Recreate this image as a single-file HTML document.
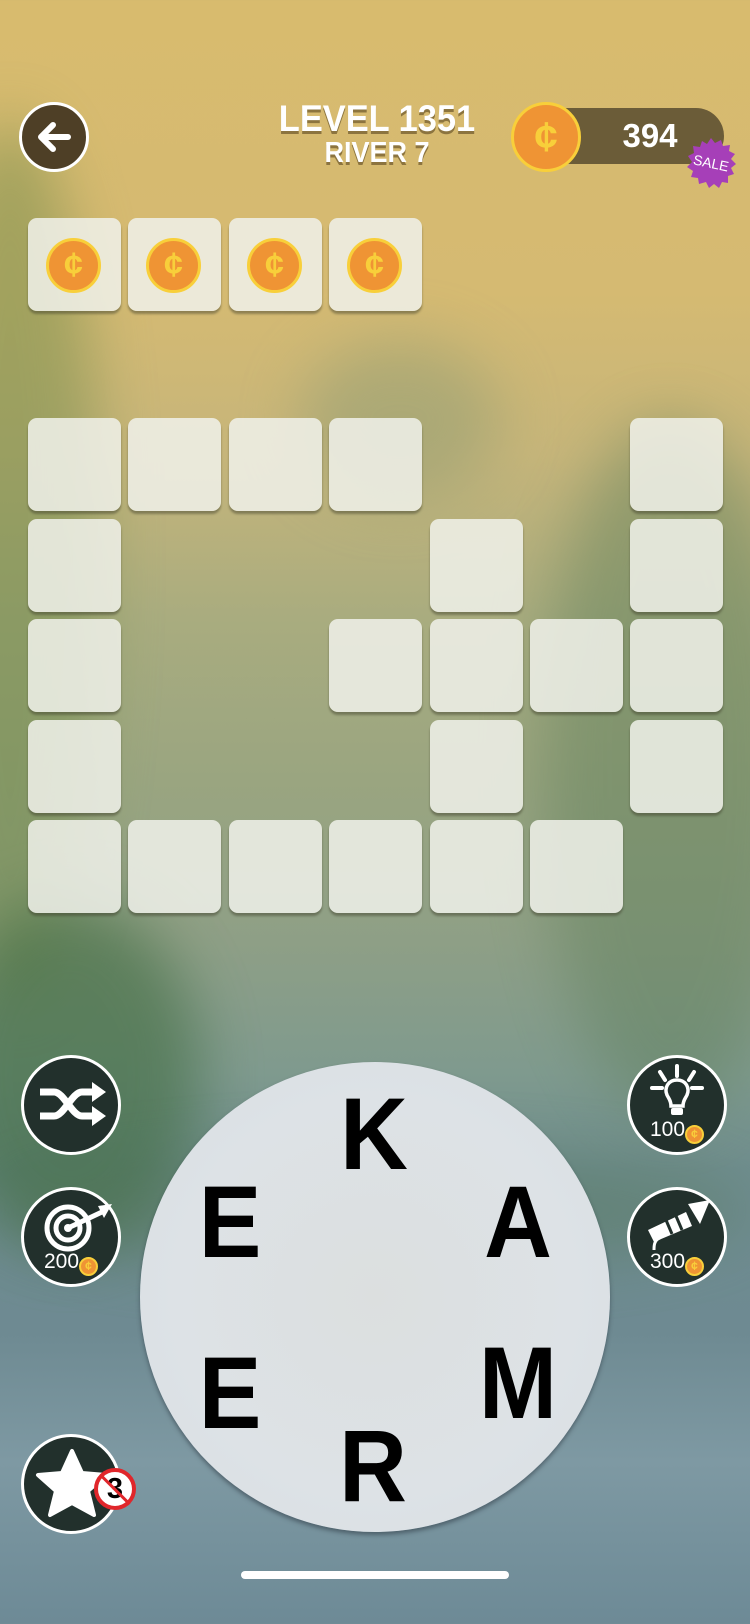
<!DOCTYPE html>
<html><head><meta charset="utf-8"><style>
html,body{margin:0;padding:0}
body{width:750px;height:1624px;position:relative;overflow:hidden;font-family:"Liberation Sans",sans-serif;
background:linear-gradient(180deg,#d8bb6e 0%,#d5ba72 18%,#c6b57a 28%,#a9ac7f 38%,#9aa580 48%,#8e9f86 58%,#7f9a8e 66%,#6f8d8e 72%,#6e8a92 82%,#7e99a3 90%,#6d8a96 100%);}
.bg{position:absolute;border-radius:50%;filter:blur(30px)}
.t{position:absolute;width:93px;height:93px;border-radius:9px;background:rgba(240,241,234,.86);box-shadow:0 3px 2px rgba(60,60,40,.45)}
.coin{position:absolute;border-radius:50%;background:#ef9434;border:3px solid #f8cf3a;box-sizing:border-box;display:flex;align-items:center;justify-content:center;color:#f8cf3a;font-weight:bold}
.btn{position:absolute;width:100px;height:100px;border-radius:50%;background:#22302c;border:3px solid #fff;box-sizing:border-box;color:#fff}
.L{position:absolute;font-size:102px;font-weight:bold;color:#000;transform:translate(-50%,-50%) scaleX(.92);line-height:1}
.cost{position:absolute;bottom:8px;left:0;right:0;text-align:center;font-size:21px;color:#fff}
.sc{display:inline-block;width:19px;height:19px;border-radius:50%;background:#ef9434;border:2px solid #f8cf3a;box-sizing:border-box;font-size:12px;line-height:15px;color:#f8cf3a;vertical-align:-2px;font-weight:bold}
</style></head><body>
<div class="bg" style="left:-80px;top:120px;width:180px;height:880px;background:#6f8a4a;opacity:.5"></div>
<div class="bg" style="left:-60px;top:900px;width:260px;height:350px;background:#3f6b3f;opacity:.6"></div>
<div class="bg" style="left:540px;top:420px;width:260px;height:700px;background:#5f7f5a;opacity:.45"></div>
<div class="bg" style="left:300px;top:340px;width:200px;height:160px;background:#8f9c74;opacity:.5"></div>
<div class="bg" style="left:0;top:1150px;width:750px;height:120px;background:#4f7350;opacity:.35"></div>

<div style="position:absolute;left:19px;top:102px;width:70px;height:70px;border-radius:50%;background:#4e3f26;border:3px solid #fff;box-sizing:border-box">
<svg width="64" height="64" viewBox="0 0 64 64" style="position:absolute;left:0;top:0"><path d="M46 32H20M31 20L19 32L31 44" stroke="#fff" stroke-width="6" fill="none" stroke-linecap="round" stroke-linejoin="round"/></svg></div>
<div style="position:absolute;left:0;width:754px;top:98px;text-align:center;color:#fff;font-weight:bold;font-size:37px;text-shadow:0 3px 0 rgba(90,70,30,.6);line-height:42px;transform:scaleX(.93)">LEVEL 1351</div>
<div style="position:absolute;left:0;width:754px;top:136px;text-align:center;color:#fff;font-weight:bold;font-size:29px;text-shadow:0 3px 0 rgba(90,70,30,.6);line-height:34px;transform:scaleX(.93)">RIVER 7</div>
<div style="position:absolute;left:550px;top:108px;width:174px;height:56px;border-radius:0 28px 28px 0;background:#6b5c38"></div>
<div style="position:absolute;left:600px;top:112px;width:100px;text-align:center;color:#fff;font-size:33px;font-weight:bold;line-height:48px">394</div>
<div class="coin" style="left:511px;top:102px;width:70px;height:70px;font-size:42px">¢</div>
<svg width="52" height="52" viewBox="0 0 52 52" style="position:absolute;left:685px;top:137px"><polygon fill="#a63fb8" points="26,1 30,6 36,3 38,9 45,8 44,14 50,17 46,22 51,27 46,31 49,37 43,39 43,46 37,45 34,51 29,47 24,51 21,45 14,47 13,41 6,40 8,34 2,30 7,25 3,19 9,16 8,9 15,10 17,4 22,7"/><text x="26" y="31" fill="#fff" font-size="14" font-family="Liberation Sans" text-anchor="middle" transform="rotate(12 26 26)">SALE</text></svg>

<div class="t" style="left:28px;top:218px"></div><div class="t" style="left:128px;top:218px"></div><div class="t" style="left:229px;top:218px"></div><div class="t" style="left:329px;top:218px"></div>
<div class="coin" style="left:46px;top:238px;width:55px;height:55px;font-size:34px">¢</div>
<div class="coin" style="left:146px;top:238px;width:55px;height:55px;font-size:34px">¢</div>
<div class="coin" style="left:247px;top:238px;width:55px;height:55px;font-size:34px">¢</div>
<div class="coin" style="left:347px;top:238px;width:55px;height:55px;font-size:34px">¢</div>

<div class="t" style="left:28px;top:418px"></div><div class="t" style="left:128px;top:418px"></div><div class="t" style="left:229px;top:418px"></div><div class="t" style="left:329px;top:418px"></div><div class="t" style="left:630px;top:418px"></div>
<div class="t" style="left:28px;top:519px"></div><div class="t" style="left:430px;top:519px"></div><div class="t" style="left:630px;top:519px"></div>
<div class="t" style="left:28px;top:619px"></div><div class="t" style="left:329px;top:619px"></div><div class="t" style="left:430px;top:619px"></div><div class="t" style="left:530px;top:619px"></div><div class="t" style="left:630px;top:619px"></div>
<div class="t" style="left:28px;top:720px"></div><div class="t" style="left:430px;top:720px"></div><div class="t" style="left:630px;top:720px"></div>
<div class="t" style="left:28px;top:820px"></div><div class="t" style="left:128px;top:820px"></div><div class="t" style="left:229px;top:820px"></div><div class="t" style="left:329px;top:820px"></div><div class="t" style="left:430px;top:820px"></div><div class="t" style="left:530px;top:820px"></div>

<div style="position:absolute;left:140px;top:1062px;width:470px;height:470px;border-radius:50%;background:radial-gradient(circle at 50% 50%,#dcdfdf,#dde2e6 60%,#d7dde2);box-shadow:0 3px 4px rgba(40,50,60,.5)"></div>
<div class="L" style="left:374px;top:1134px">K</div>
<div class="L" style="left:230px;top:1222px">E</div>
<div class="L" style="left:518px;top:1222px">A</div>
<div class="L" style="left:230px;top:1393px">E</div>
<div class="L" style="left:518px;top:1383px">M</div>
<div class="L" style="left:373px;top:1466px">R</div>

<div class="btn" style="left:21px;top:1055px"><svg width="94" height="94" viewBox="0 0 94 94"><path d="M16 34H30C40 34 48 58 58 58H70M16 58H30C40 58 48 34 58 34H70" stroke="#fff" stroke-width="7" fill="none"/><path d="M68 24L82 34L68 44Z M68 48L82 58L68 68Z" fill="#fff"/></svg></div>
<div class="btn" style="left:21px;top:1187px"><svg width="94" height="94" viewBox="0 0 94 94"><circle cx="44" cy="38" r="21" stroke="#fff" stroke-width="5" fill="none"/><circle cx="44" cy="38" r="12" stroke="#fff" stroke-width="5" fill="none"/><circle cx="44" cy="38" r="4" fill="#fff"/><path d="M44 38L78 22" stroke="#fff" stroke-width="5"/><path d="M74 16L88 14L80 28Z" fill="#fff"/></svg><div class="cost">200<span class="sc">¢</span></div></div>
<div class="btn" style="left:21px;top:1434px"><svg width="94" height="94" viewBox="0 0 94 94"><path d="M48 14L58 36L82 38L64 54L70 78L48 66L26 78L32 54L14 38L38 36Z" fill="#fff" stroke="#fff" stroke-width="4" stroke-linejoin="round"/></svg></div>
<div style="position:absolute;left:94px;top:1468px;width:42px;height:42px;border-radius:50%;background:#fff;box-sizing:border-box;border:4px solid #e0262b;text-align:center;font-weight:bold;font-size:29px;line-height:34px;color:#000">3<div style="position:absolute;left:16px;top:-2px;width:3px;height:40px;background:#e0262b;transform:rotate(-45deg)"></div></div>

<div class="btn" style="left:627px;top:1055px"><svg width="94" height="94" viewBox="0 0 94 94"><path d="M47 8V18M30 14L35 22M64 14L59 22M22 30H32M62 30H72" stroke="#fff" stroke-width="4" stroke-linecap="round"/><path d="M47 22C38 22 34 30 37 37C39 41 41 43 41 48H53C53 43 55 41 57 37C60 30 56 22 47 22Z" fill="none" stroke="#fff" stroke-width="3.5"/><rect x="41" y="50" width="12" height="7" rx="2" fill="#fff"/></svg><div class="cost">100<span class="sc">¢</span></div></div>
<div class="btn" style="left:627px;top:1187px"><svg width="94" height="94" viewBox="0 0 94 94"><path d="M18 40L56 22L62 36L24 52Z" fill="#fff"/><path d="M58 14L80 10L70 34Z" fill="#fff"/><path d="M30 48C24 50 24 56 24 60" stroke="#fff" stroke-width="3" fill="none"/><path d="M36 30L42 44M46 26L52 40" stroke="#22302c" stroke-width="3"/></svg><div class="cost">300<span class="sc">¢</span></div></div>

<div style="position:absolute;left:241px;top:1571px;width:268px;height:8px;border-radius:4px;background:#fff"></div>
</body></html>
